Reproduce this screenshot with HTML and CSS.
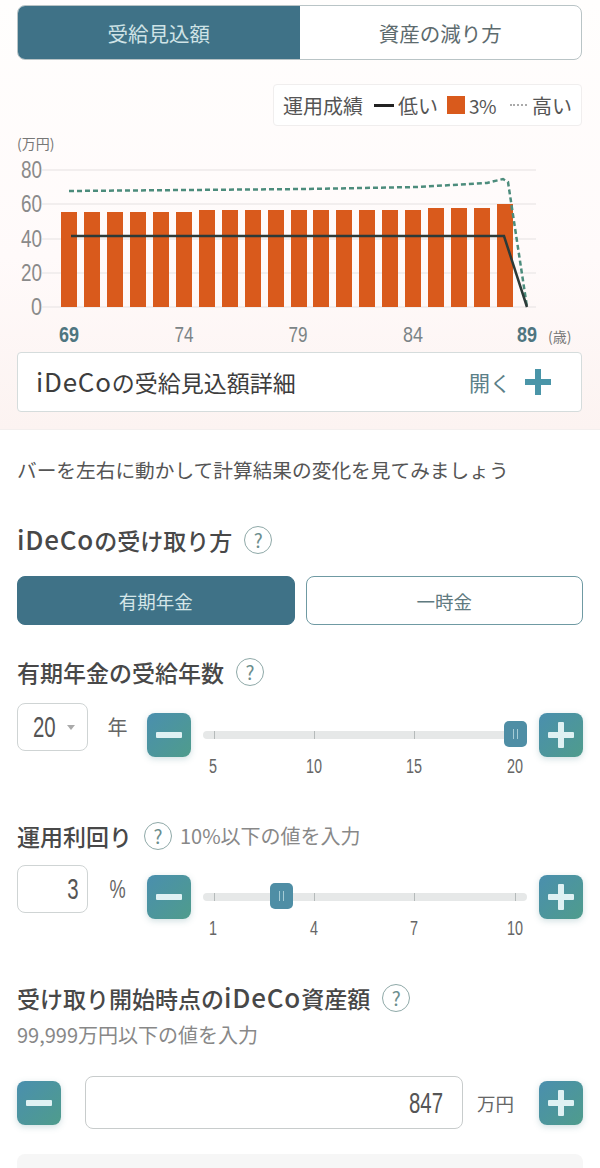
FILE: index.html
```html
<!DOCTYPE html>
<html lang="ja">
<head>
    <meta charset="UTF-8">
    <meta name="viewport" content="width=device-width, initial-scale=1.0">
    <title>iDeCo 受給見込額</title>
    <link rel="stylesheet" href="styles.css">
</head>
<body>
    <section class="panel">
        <div class="tabs">
            <div class="tab tab-on">受給見込額</div>
            <div class="tab">資産の減り方</div>
        </div>

        <div class="legend-row">
            <div class="legend">
                <span>運用成績</span>
                <i class="mark-low"></i><span>低い</span>
                <i class="mark-mid"></i><span class="legend-num">3%</span>
                <i class="mark-high"></i><span>高い</span>
            </div>
        </div>

        <svg class="chart" width="566" height="218" viewBox="0 0 566 218">
            <text class="unit" x="0" y="19">(万円)</text>
            <g class="grid">
                <line x1="25" y1="40" x2="519" y2="40"/>
                <line x1="25" y1="74" x2="519" y2="74"/>
                <line x1="25" y1="109" x2="519" y2="109"/>
                <line x1="25" y1="143" x2="519" y2="143"/>
                <line x1="25" y1="177" x2="519" y2="177"/>
            </g>
            <g class="ylabels">
                <text x="25" y="48" textLength="21" lengthAdjust="spacingAndGlyphs">80</text>
                <text x="25" y="82" textLength="21" lengthAdjust="spacingAndGlyphs">60</text>
                <text x="25" y="117" textLength="21" lengthAdjust="spacingAndGlyphs">40</text>
                <text x="25" y="151" textLength="21" lengthAdjust="spacingAndGlyphs">20</text>
                <text x="25" y="185" textLength="11" lengthAdjust="spacingAndGlyphs">0</text>
            </g>
            <g class="bars">
                <rect x="44" y="82" width="16" height="95"/>
                <rect x="67" y="82" width="16" height="95"/>
                <rect x="90" y="82" width="16" height="95"/>
                <rect x="113" y="82" width="16" height="95"/>
                <rect x="136" y="82" width="16" height="95"/>
                <rect x="159" y="82" width="16" height="95"/>
                <rect x="182" y="80" width="16" height="97"/>
                <rect x="205" y="80" width="16" height="97"/>
                <rect x="228" y="80" width="16" height="97"/>
                <rect x="251" y="80" width="16" height="97"/>
                <rect x="274" y="80" width="16" height="97"/>
                <rect x="296" y="80" width="16" height="97"/>
                <rect x="319" y="80" width="16" height="97"/>
                <rect x="342" y="80" width="16" height="97"/>
                <rect x="365" y="80" width="16" height="97"/>
                <rect x="388" y="80" width="16" height="97"/>
                <rect x="411" y="78" width="16" height="99"/>
                <rect x="434" y="78" width="16" height="99"/>
                <rect x="457" y="78" width="16" height="99"/>
                <rect x="480" y="74" width="16" height="103"/>
            </g>
            <polyline class="line-high" points="52,61 170,60 290,59 400,57 470,53 486,49 491,52 510,177"/>
            <polyline class="line-low" points="54,106 487,106 510,177"/>
            <g class="xlabels">
                <text x="52" y="212" class="strong" textLength="20" lengthAdjust="spacingAndGlyphs">69</text>
                <text x="167" y="212" textLength="19" lengthAdjust="spacingAndGlyphs">74</text>
                <text x="281" y="212" textLength="19" lengthAdjust="spacingAndGlyphs">79</text>
                <text x="396" y="212" textLength="20" lengthAdjust="spacingAndGlyphs">84</text>
                <text x="510" y="212" class="strong" textLength="20" lengthAdjust="spacingAndGlyphs">89</text>
            </g>
            <text class="unit" x="531" y="212">(歳)</text>
        </svg>

        <div class="detail">
            <span class="detail-title"><span class="latin">iDeCo</span>の受給見込額詳細</span>
            <span class="detail-open">開く
                <svg width="28" height="28" viewBox="0 0 28 28"><path d="M14 1v26M1 14h26" stroke="#4a95a8" stroke-width="6" fill="none"/></svg>
            </span>
        </div>
    </section>

    <main class="form">
        <p class="lead">バーを左右に動かして計算結果の変化を見てみましょう</p>

        <h2 class="title title-first"><span><span class="latin">iDeCo</span>の受け取り方</span> <span class="help">?</span></h2>
        <div class="choice">
            <div class="choice-btn choice-on">有期年金</div>
            <div class="choice-btn">一時金</div>
        </div>

        <h2 class="title title-years">有期年金の受給年数 <span class="help">?</span></h2>
        <div class="row row-years">
            <div class="box box-select"><span class="digits digits-left">20</span><i class="caret"></i></div>
            <span class="suffix">年</span>
            <button class="step step-minus"></button>
            <div class="slider">
                <div class="track">
                    <i class="tick t1"></i><i class="tick t2"></i><i class="tick t3"></i><i class="tick t4"></i>
                    <div class="thumb thumb-end"><b></b></div>
                </div>
                <div class="scale"><span>5</span><span>10</span><span>15</span><span>20</span></div>
            </div>
            <button class="step step-plus"></button>
        </div>

        <h2 class="title title-rate">運用利回り <span class="help">?</span> <small class="note note-rate">10%以下の値を入力</small></h2>
        <div class="row row-rate">
            <div class="box box-num"><span class="digits">3</span></div>
            <span class="suffix"><span class="percent">%</span></span>
            <button class="step step-minus"></button>
            <div class="slider">
                <div class="track">
                    <i class="tick t1"></i><i class="tick t2"></i><i class="tick t3"></i><i class="tick t4"></i>
                    <div class="thumb thumb-rate"><b></b></div>
                </div>
                <div class="scale"><span>1</span><span>4</span><span>7</span><span>10</span></div>
            </div>
            <button class="step step-plus"></button>
        </div>

        <h2 class="title title-asset"><span>受け取り開始時点の<span class="latin">iDeCo</span>資産額</span> <span class="help">?</span></h2>
        <p class="note note-asset">99,999万円以下の値を入力</p>
        <div class="row row-asset">
            <button class="step step-minus"></button>
            <div class="box box-wide"><span class="digits">847</span></div>
            <span class="suffix-man">万円</span>
            <button class="step step-plus"></button>
        </div>
        <div class="bottom-box"></div>
    </main>
</body>
</html>
```

FILE: styles.css
```css
body {
    margin: 0;
    height: 1168px;
    overflow: hidden;
    background-color: #fff;
    color: #444;
    font-family: "Noto Sans CJK JP", "Noto Sans", sans-serif;
}

.panel {
    height: 430px;
    box-sizing: border-box;
    padding: 5px 18px 0 17px;
    background: linear-gradient(#fffefd, #fffafa 60%, #fcf3f1);
    border-bottom: 1px solid #f3efee;
}

.tabs {
    display: flex;
    height: 55px;
    box-sizing: border-box;
    border: 1px solid #b9c4c6;
    border-radius: 8px;
    overflow: hidden;
    background-color: #fff;
}

.tab {
    flex: 1;
    display: flex;
    justify-content: center;
    align-items: center;
    font-size: 20.5px;
    color: #5d6b6e;
}

.tab-on {
    background-color: #3f7287;
    color: #cfe3e6;
}

.legend-row {
    display: flex;
    justify-content: flex-end;
    margin-top: 24px;
}

.legend {
    display: flex;
    align-items: center;
    height: 42px;
    box-sizing: border-box;
    padding: 0 9px;
    border: 1px solid #f0eeee;
    border-radius: 4px;
    background-color: #fff;
    font-size: 20px;
    color: #555;
}

.legend-num {
    font-size: 19px;
    letter-spacing: -0.5px;
}

.mark-low {
    width: 20px;
    height: 3px;
    margin: 0 4px 0 11px;
    background-color: #222;
}

.mark-mid {
    width: 18px;
    height: 18px;
    margin: 0 4px 0 9px;
    background-color: #d95a1c;
}

.mark-high {
    width: 17px;
    margin: 0 5px 0 14px;
    border-top: 2px dotted #aaa;
}

.chart {
    display: block;
    margin-top: 4px;
}

.chart .unit {
    font-size: 14px;
    fill: #777;
}

.grid line {
    stroke: #eeeaea;
    stroke-width: 1.5;
}

.ylabels text {
    font-family: "Liberation Sans", sans-serif;
    font-size: 23px;
    fill: #8a8a8a;
    text-anchor: end;
}

.bars rect {
    fill: #d95a1c;
}

.line-high {
    fill: none;
    stroke: #4c8c7c;
    stroke-width: 2.5;
    stroke-dasharray: 5 3;
}

.line-low {
    fill: none;
    stroke: #2c3a38;
    stroke-width: 2.5;
}

.xlabels text {
    font-family: "Liberation Sans", sans-serif;
    font-size: 22px;
    fill: #7b8486;
    text-anchor: middle;
}

.xlabels .strong {
    font-weight: bold;
    fill: #4f7580;
}

.detail {
    display: flex;
    justify-content: space-between;
    align-items: center;
    height: 60px;
    box-sizing: border-box;
    margin-top: 4px;
    padding: 0 29px 0 18px;
    border: 1px solid #d5dcdc;
    border-radius: 4px;
    background-color: #fff;
}

.detail-title {
    font-size: 23px;
    color: #3d3d3d;
}

.latin {
    font-size: 26px;
    line-height: 0;
    letter-spacing: 0.8px;
}

.detail-open {
    display: flex;
    align-items: center;
    gap: 13px;
    font-size: 21px;
    color: #5b8088;
}

.form {
    padding: 0 17px 0 17px;
}

.lead {
    margin: 25px 0 0;
    font-size: 19.7px;
    line-height: 30px;
    white-space: nowrap;
    color: #555;
}

.title {
    display: flex;
    align-items: center;
    gap: 12px;
    margin: 0;
    font-size: 23px;
    font-weight: 500;
    line-height: 30px;
    color: #484848;
}

.title-first {
    margin-top: 40px;
}

.title-years {
    margin-top: 32px;
}

.title-rate {
    margin-top: 44px;
}

.title-asset {
    margin-top: 44px;
}

.help {
    width: 28px;
    height: 28px;
    box-sizing: border-box;
    display: flex;
    justify-content: center;
    align-items: center;
    border: 1.5px solid #8fa9a8;
    border-radius: 50%;
    font-size: 19px;
    font-weight: 400;
    color: #6b8d8d;
}

.note {
    margin: 0;
    font-size: 20px;
    font-weight: 400;
    color: #888;
}

.note-rate {
    margin-left: -4px;
}

.note-asset {
    margin-top: 9px;
    line-height: 26px;
}

.choice {
    display: flex;
    gap: 11px;
    margin-top: 21px;
}

.choice-btn {
    flex: 1;
    height: 49px;
    box-sizing: border-box;
    display: flex;
    justify-content: center;
    align-items: center;
    border: 1.5px solid #6f9aa3;
    border-radius: 8px;
    font-size: 18.5px;
    color: #5f7a80;
    background-color: #fff;
}

.choice-on {
    border-color: #3f7287;
    background-color: #3f7287;
    color: #d5e6e8;
}

.row {
    display: flex;
    align-items: flex-start;
}

.row-years {
    margin-top: 16px;
}

.row-rate {
    margin-top: 14px;
}

.box {
    box-sizing: border-box;
    display: flex;
    align-items: center;
    border: 1px solid #cfd4d4;
    border-radius: 8px;
    background-color: #fff;
    color: #555;
}

.digits {
    display: inline-block;
    font-family: "Liberation Sans", sans-serif;
    font-size: 30px;
    transform: scaleX(0.68);
    transform-origin: right center;
}

.digits-left {
    transform-origin: left center;
}

.box-select {
    width: 71px;
    height: 48px;
    padding-left: 15px;
}

.caret {
    width: 0;
    height: 0;
    margin-left: 1px;
    border: 4px solid transparent;
    border-top: 5px solid #aaa;
    border-bottom: 0;
}

.box-num {
    width: 71px;
    height: 48px;
    justify-content: flex-end;
    padding-right: 8px;
}

.suffix {
    width: 59px;
    margin-top: 9px;
    text-align: center;
    font-size: 20px;
    line-height: 30px;
    color: #666;
}

.percent {
    display: inline-block;
    font-family: "Liberation Sans", sans-serif;
    font-size: 26px;
    transform: scaleX(0.7);
}

.step {
    position: relative;
    flex: none;
    width: 44px;
    height: 44px;
    margin-top: 10px;
    padding: 0;
    border: none;
    border-radius: 8px;
    background: linear-gradient(135deg, #4a8fae, #4f9c8c);
    box-shadow: 0 2px 6px rgba(70, 130, 140, 0.25);
}

.step::before {
    content: "";
    position: absolute;
    left: 9px;
    top: 19px;
    width: 26px;
    height: 6px;
    border-radius: 1px;
    background-color: #dff1f3;
}

.step-plus::after {
    content: "";
    position: absolute;
    left: 19px;
    top: 9px;
    width: 6px;
    height: 26px;
    border-radius: 1px;
    background-color: #dff1f3;
}

.slider {
    flex: 1;
    margin: 0 12px;
}

.track {
    position: relative;
    height: 8px;
    margin-top: 28px;
    background-color: #e6e8e8;
    border-radius: 4px;
}

.tick {
    position: absolute;
    top: 0;
    width: 1px;
    height: 8px;
    background-color: #b5baba;
}

.t1 { left: 11px; }
.t2 { left: 111px; }
.t3 { left: 211px; }
.t4 { left: 312px; }

.thumb {
    position: absolute;
    top: -10px;
    width: 23px;
    height: 26px;
    display: flex;
    justify-content: center;
    align-items: center;
    border-radius: 5px;
    background-color: #4f8ea5;
}

.thumb b {
    width: 3px;
    height: 10px;
    border-left: 1px solid #a5ccd6;
    border-right: 1px solid #a5ccd6;
}

.thumb-end { right: 0; }
.thumb-rate { left: 67px; }

.scale {
    display: flex;
    justify-content: space-between;
    margin: 16px 0 0 -2px;
    font-family: "Liberation Sans", sans-serif;
    font-size: 20px;
    line-height: 22px;
    color: #666;
}

.scale span {
    width: 24px;
    text-align: center;
    transform: scaleX(0.72);
}

.row-asset {
    align-items: center;
    margin-top: 28px;
}

.row-asset .step {
    margin-top: 0;
}

.box-wide {
    flex: 1;
    height: 53px;
    margin-left: 24px;
    justify-content: flex-end;
    padding-right: 19px;
    border-color: #c8cccc;
}

.suffix-man {
    width: 76px;
    padding-left: 14px;
    box-sizing: border-box;
    font-size: 18.5px;
    color: #666;
}

.bottom-box {
    height: 40px;
    margin-top: 25px;
    border-radius: 8px;
    background-color: #f6f6f6;
}
```
